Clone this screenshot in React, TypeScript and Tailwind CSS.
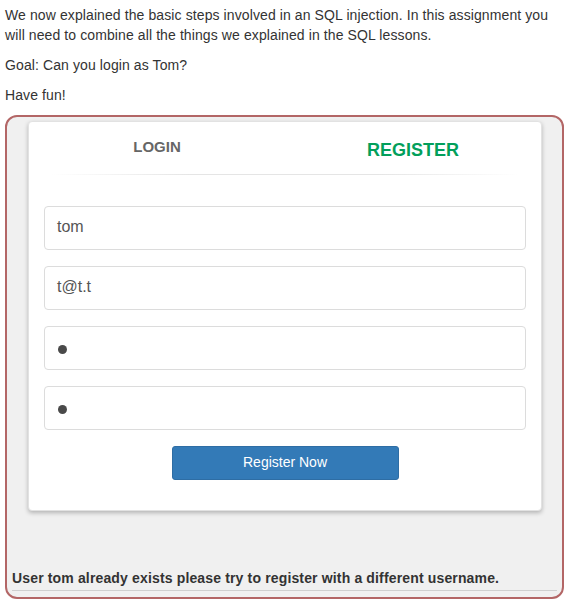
import React from "react";

const fields = [
  { value: "tom", kind: "text" },
  { value: "t@t.t", kind: "text" },
  { value: "", kind: "dot" },
  { value: "", kind: "dot" },
];

export default function App() {
  return (
    <div className="min-h-[604px] bg-white pt-[5px] font-['Liberation_Sans',Arial,sans-serif] text-[14px] leading-[20px] text-[#333]">
      <div className="pl-[5px] pr-[14px] tracking-[0.1px]">
        <p className="mb-[10px]">
          We now explained the basic steps involved in an SQL injection. In this assignment you will need to combine all
          the things we explained in the SQL lessons.
        </p>
        <p className="mb-[10px]">Goal: Can you login as Tom?</p>
        <p className="mb-[10px]">Have fun!</p>
      </div>

      {/* attack container */}
      <div className="mx-[5px] rounded-[12px] border-2 border-[#b36666] bg-[#f0f0f0] px-[3px] pb-[6px] pt-[4px]">
        <div className="ml-[18px] mr-[17px] rounded-[4px] border border-[#e2e2e2] bg-white px-[15px] pb-[30px] shadow-[0_2px_4px_rgba(0,0,0,0.25)]">
          {/* tabs */}
          <div className="grid grid-cols-2 -mx-[15px]">
            <div className="pt-[15px] text-center text-[15px] font-bold leading-[20px] text-[#666]">LOGIN</div>
            <div className="pt-[17px] text-center text-[18px] font-bold leading-[22px] text-[#029f5b]">REGISTER</div>
          </div>
          <div className="mx-[7px] mt-[13px] h-px bg-[linear-gradient(90deg,rgba(221,221,221,0),#e5e5e5_30%,#e5e5e5_70%,rgba(221,221,221,0))]" />

          <div className="mt-[31px] flex flex-col gap-[16px]">
            {fields.map((f, i) => (
              <div
                key={i}
                className="flex h-[44px] items-center rounded-[4px] border border-[#dcdcdc] bg-white px-[12px] pb-[2px] text-[16px] text-[#555]"
              >
                {f.kind === "dot" ? (
                  <span className="ml-[1px] mt-[4px] block h-[9px] w-[9px] rounded-full bg-[#4a4a4a]" />
                ) : (
                  f.value
                )}
              </div>
            ))}
          </div>

          <div className="mt-[16px] flex justify-center">
            <button className="h-[34px] w-[227px] rounded-[3px] border border-[#2e6da4] bg-[#337ab7] pb-[3px] text-[14px] text-white">
              Register Now
            </button>
          </div>
        </div>

        <div className="mx-[2px] mt-[57px] font-bold tracking-[0.15px] text-[#333]">
          User tom already exists please try to register with a different username.
        </div>
        <div className="mx-[2px] mt-[2px] h-px bg-[#cfcfcf]" />
      </div>
    </div>
  );
}
